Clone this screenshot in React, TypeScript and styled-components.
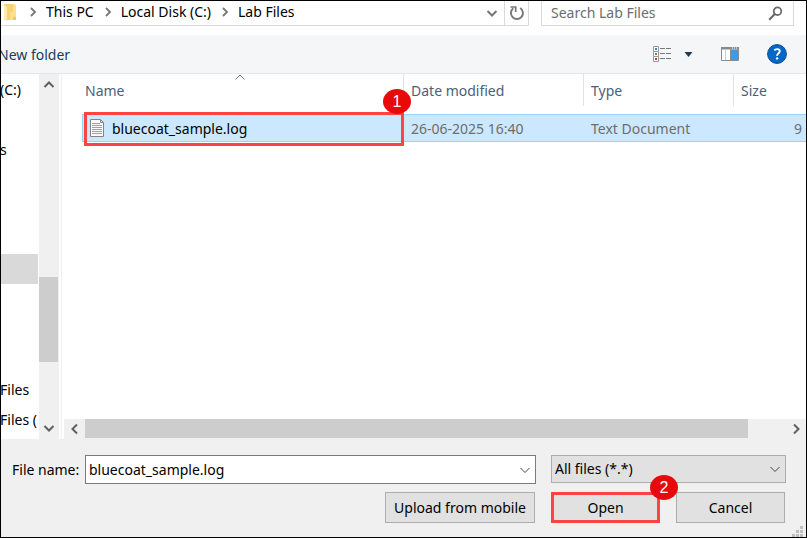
import React, { useState } from "react";
import styled, { createGlobalStyle } from "styled-components";

const GlobalStyle = createGlobalStyle`
  *, *::before, *::after { box-sizing: border-box; }
  body { margin: 0; }
  body, button, input, select {
    font-family: "Noto Sans", "Open Sans", sans-serif;
    font-size: 14px;
    line-height: 20px;
    color: #000;
  }
`;

const Dialog = styled.main`
  display: flex;
  flex-direction: column;
  min-height: 100vh;
  border: 1px solid #000;
  background: #fff;
  overflow: hidden;
`;

const AddressRow = styled.header`
  display: flex;
  gap: 12px;
  height: 34px;
  padding: 0 12px 9px 0;
`;

const AddressBar = styled.nav`
  display: flex;
  flex: 1;
  align-items: center;
  min-width: 0;
  padding-left: 3px;
  border: solid #d9d9d9;
  border-width: 0 1px 1px 0;
`;

const Crumbs = styled.ol`
  display: flex;
  flex: 1;
  align-items: center;
  margin: 0 0 0 11px;
  padding: 0 0 2px;
  list-style: none;
  white-space: nowrap;
`;

const Crumb = styled.li`
  display: flex;
  align-items: center;
  gap: 8px;
  margin-right: 9px;
`;

const CrumbLink = styled.a`
  color: #000;
  text-decoration: none;
`;

const IconButton = styled.button<{ $width: number; $divided?: boolean }>`
  display: flex;
  flex: none;
  align-items: center;
  justify-content: center;
  align-self: stretch;
  width: ${(p) => p.$width}px;
  padding: 0;
  border: 0;
  border-left: ${(p) => (p.$divided ? "1px solid #d9d9d9" : "0")};
  background: transparent;
`;

const SearchBox = styled.label`
  display: flex;
  flex: 0 0 253px;
  align-items: center;
  padding: 0 10px 0 9px;
  border: solid #d9d9d9;
  border-width: 0 1px 1px;
`;

const SearchInput = styled.input`
  flex: 1;
  min-width: 0;
  padding: 0;
  border: 0;
  outline: 0;
  background: transparent;
  color: #6d6d6d;
  &::placeholder { color: #6d6d6d; opacity: 1; }
`;

const Toolbar = styled.div`
  display: flex;
  align-items: center;
  height: 39px;
  padding-right: 9px;
  border-bottom: 1px solid #e4e6e8;
  background: #f5f6f7;
`;

const NewFolder = styled.button`
  margin: 0 auto 0 -3px;
  padding: 2px 0 0;
  border: 0;
  background: transparent;
  color: #1e395b;
`;

const Body = styled.div`
  display: flex;
  flex: 1;
`;

const Tree = styled.ul`
  flex: 0 0 37px;
  margin: 0 1px 0 0;
  padding: 0;
  list-style: none;
  overflow: hidden;
  white-space: nowrap;
`;

const TreeItem = styled.li<{ $selected?: boolean }>`
  height: 30px;
  padding-top: 6px;
  text-indent: -1px;
  background: ${(p) => (p.$selected ? "#d9d9d9" : "transparent")};
`;

const VerticalScroll = styled.div`
  display: flex;
  flex: 0 0 20px;
  flex-direction: column;
  align-items: center;
  padding: 5px 0;
  background: #f0f0f0;
`;

const VerticalTrack = styled.div`
  display: flex;
  flex: 1;
  flex-direction: column;
  align-self: stretch;
`;

const VerticalThumb = styled.div`
  flex: 85;
  margin-right: 1px;
  background: #cdcdcd;
`;

const TrackGap = styled.div<{ $share: number }>`
  flex: ${(p) => p.$share};
`;

const FilePane = styled.section`
  display: flex;
  flex: 1;
  flex-direction: column;
  min-width: 0;
  margin-left: 2px;
  border-left: 1px solid #f0f0f0;
`;

const FileTable = styled.table`
  width: calc(100% - 20px);
  margin-left: 20px;
  border-collapse: separate;
  border-spacing: 0;
  table-layout: fixed;
`;

const HeadCell = styled.th<{ $width?: number; $first?: boolean }>`
  position: relative;
  width: ${(p) => (p.$width ? `${p.$width}px` : "auto")};
  height: 32px;
  padding: 1px 0 0 ${(p) => (p.$first ? 3 : 7)}px;
  border-right: ${(p) => (p.$width ? "1px solid #e0e2e4" : "0")};
  color: #4c607a;
  font-weight: 400;
  text-align: left;
`;

const SortMark = styled.svg`
  position: absolute;
  top: 0;
  left: calc(50% - 8px);
`;

const Spacer = styled.td`
  height: 8px;
  padding: 0;
`;

const Cell = styled.td<{ $first?: boolean; $right?: boolean }>`
  position: relative;
  height: 28px;
  padding: 1px 4px 0 ${(p) => (p.$first ? 6 : 7)}px;
  border: solid #99d1ff;
  border-width: 1px 0 1px ${(p) => (p.$first ? 1 : 0)}px;
  background: #cce8ff;
  color: ${(p) => (p.$first ? "#000" : "#6d6d6d")};
  text-align: ${(p) => (p.$right ? "right" : "left")};
  white-space: nowrap;
`;

const FileName = styled.span`
  display: flex;
  align-items: center;
  gap: 7px;
`;

const Highlight = styled.div`
  position: absolute;
  top: -3px;
  right: 0;
  bottom: -5px;
  left: 1px;
  border: 3px solid #fd4344;
  pointer-events: none;
`;

const Badge = styled.span`
  position: absolute;
  top: -26px;
  right: -7px;
  display: grid;
  place-items: center;
  width: 28px;
  height: 25px;
  border-radius: 50%;
  background: #e80a0a;
  color: #fff;
  font-family: "Liberation Sans", sans-serif;
  font-size: 16px;
  z-index: 1;
`;

const HorizontalScroll = styled.div`
  display: flex;
  height: 20px;
  margin: auto 0 0 2px;
  padding-bottom: 1px;
  background: #f0f0f0;
`;

const HorizontalThumb = styled.div`
  flex: 663;
  background: #cdcdcd;
`;

const Footer = styled.form`
  position: relative;
  display: flex;
  flex-direction: column;
  gap: 8px;
  padding: 16px 20px 14px 11px;
  background: #f0f0f0;
`;

const FieldRow = styled.div`
  display: flex;
  align-items: center;
`;

const FieldLabel = styled.label`
  flex: 0 0 73px;
`;

const Combo = styled.div`
  display: flex;
  flex: 1;
  height: 29px;
  margin-right: 15px;
  border: 1px solid #7a7a7a;
  background: #fff;
`;

const ComboInput = styled.input`
  flex: 1;
  min-width: 0;
  padding: 0 0 0 3px;
  border: 0;
  outline: 0;
  background: transparent;
`;

const FilterWrap = styled.div`
  display: grid;
  flex: 0 0 235px;
  align-self: flex-start;
  align-items: center;
  & > * { grid-area: 1 / 1; }
  & > svg { justify-self: end; margin-right: 5px; pointer-events: none; }
`;

const FilterSelect = styled.select`
  width: 100%;
  height: 28px;
  padding: 0 24px 0 3px;
  border: 1px solid #adadad;
  border-radius: 0;
  appearance: none;
  background: #e1e1e1;
`;

const ButtonRow = styled.div`
  display: flex;
  justify-content: flex-end;
  gap: 16px;
  padding-right: 1px;
`;

const PushButton = styled.button<{ $width: number; $marked?: boolean }>`
  position: relative;
  width: ${(p) => p.$width}px;
  height: 31px;
  padding: 0;
  border: ${(p) => (p.$marked ? "3px solid #fd4344" : "1px solid #adadad")};
  background: #e1e1e1;
`;

const ButtonBadge = styled(Badge)`
  top: -20px;
  right: -21px;
`;

const Grip = styled.svg`
  position: absolute;
  right: 3px;
  bottom: 0;
`;

type Direction = "up" | "down" | "left" | "right";

const turns: Record<Direction, number> = { right: 0, down: 90, left: 180, up: 270 };

function Chevron({ to, weight = 2, color = "#606060" }: { to: Direction; weight?: number; color?: string }) {
  return (
    <svg width="12" height="12" viewBox="0 0 12 12" aria-hidden="true">
      <path
        d="M4 1.5 8.5 6 4 10.5"
        fill="none"
        stroke={color}
        strokeWidth={weight}
        transform={`rotate(${turns[to]} 6 6)`}
      />
    </svg>
  );
}

function CrumbChevron() {
  return (
    <svg width="10" height="12" viewBox="0 0 10 12" aria-hidden="true">
      <path d="M3 2 7 6 3 10" fill="none" stroke="#777" strokeWidth="1.8" />
    </svg>
  );
}

function FolderIcon() {
  return (
    <svg width="13" height="18" viewBox="0 0 13 18" aria-hidden="true">
      <path d="M0 0h9l3 1v15H0z" fill="#f5d273" />
      <path d="M9 1h3v15H6V9l3-2z" fill="#fbe08e" />
      <path d="M0 1l3 2v14.5L0 15z" fill="#ffebb0" />
      <path d="M9 13h3v3H9z" fill="#efc75e" />
    </svg>
  );
}

function RefreshIcon() {
  return (
    <svg width="16" height="16" viewBox="0 0 16 16" aria-hidden="true">
      <path d="M11.2 3A6 6 0 1 1 4.3 3.3" fill="none" stroke="#777" strokeWidth="1.9" />
      <path d="M1.5 2h5.2v5" fill="none" stroke="#777" strokeWidth="1.7" />
    </svg>
  );
}

function SearchIcon() {
  return (
    <svg width="15" height="15" viewBox="0 0 15 15" aria-hidden="true">
      <circle cx="9.5" cy="5.2" r="3.8" fill="none" stroke="#6b6b6b" strokeWidth="1.8" />
      <path d="M6.8 8 1.2 13.7" stroke="#6b6b6b" strokeWidth="2.2" />
    </svg>
  );
}

function ViewIcon() {
  const marks = ["#3b82c4", "#7c8a35", "#c9302c"];
  return (
    <svg width="19" height="17" viewBox="0 0 19 17" aria-hidden="true">
      {marks.map((mark, i) => (
        <g key={mark} transform={`translate(0 ${i * 5})`}>
          <path d="M.5 .5h5v5h-5z" fill="#fff" stroke="#999" />
          <path d="M2 2h2v2H2z" fill={mark} />
          <path d="M7 2.5h5M13 2.5h5" stroke="#777" />
        </g>
      ))}
    </svg>
  );
}

function PreviewIcon() {
  return (
    <svg width="18" height="14" viewBox="0 0 18 14" aria-hidden="true">
      <path d="M.5 .5h17v13H.5z" fill="#fff" stroke="#858b91" />
      <path d="M0 0h18v2.5H0z" fill="#858b91" />
      <path d="M11 1h1M13 1h1M15 1h1" stroke="#fff" />
      <path d="M4.5 3v10" stroke="#c9ccd0" />
      <path d="M10 2.5h7V13h-7z" fill="#3d9be6" />
      <path d="M9.5 2.5V13" stroke="#858b91" />
    </svg>
  );
}

function HelpIcon() {
  return (
    <svg width="20" height="20" viewBox="0 0 20 20" aria-hidden="true">
      <circle cx="10" cy="10" r="9.4" fill="#0568c8" stroke="#0a4a8c" />
      <path d="M7.2 6.2c3.5-2 6.2-.7 5.4 1.7-.5 1.4-2.6 1.8-2.5 4" fill="none" stroke="#fff" strokeWidth="1.8" />
      <circle cx="10.1" cy="14.4" r="1.2" fill="#fff" />
    </svg>
  );
}

function DocumentIcon() {
  return (
    <svg width="16" height="19" viewBox="0 0 16 19" aria-hidden="true">
      <path d="M1.5 .5h10l3 3v14h-13z" fill="#fafafa" stroke="#848484" />
      <path d="M11.5 .5v3h3" fill="none" stroke="#848484" />
      <path d="M3 4.5h8M3 6.5h10M3 8.5h10M3 10.5h10M3 12.5h10M3 14.5h10" stroke="#a0a0a0" />
    </svg>
  );
}

const crumbs = ["This PC", "Local Disk (C:)", "Lab Files"];
const treeItems = ["(C:)", "", "s", "", "", "", "", "", "", "", "Files", "Files ("];

export default function App() {
  const [fileName, setFileName] = useState("bluecoat_sample.log");

  return (
    <>
      <GlobalStyle />
      <Dialog>
        <AddressRow>
          <AddressBar aria-label="Location">
            <FolderIcon />
            <Crumbs>
              {crumbs.map((crumb) => (
                <Crumb key={crumb}>
                  <CrumbChevron />
                  <CrumbLink href="#">{crumb}</CrumbLink>
                </Crumb>
              ))}
            </Crumbs>
            <IconButton type="button" $width={24} aria-label="Previous locations">
              <Chevron to="down" color="#777" />
            </IconButton>
            <IconButton type="button" $width={24} $divided aria-label="Refresh">
              <RefreshIcon />
            </IconButton>
          </AddressBar>
          <SearchBox>
            <SearchInput type="text" placeholder="Search Lab Files" aria-label="Search Lab Files" />
            <SearchIcon />
          </SearchBox>
        </AddressRow>

        <Toolbar>
          <NewFolder type="button">New folder</NewFolder>
          <IconButton type="button" $width={24} aria-label="Change view">
            <ViewIcon />
          </IconButton>
          <IconButton type="button" $width={29} aria-label="More view options">
            <svg width="9" height="5" viewBox="0 0 9 5" aria-hidden="true">
              <path d="M.5 0h8L4.5 5z" fill="#1e395b" />
            </svg>
          </IconButton>
          <IconButton type="button" $width={54} aria-label="Preview pane">
            <PreviewIcon />
          </IconButton>
          <IconButton type="button" $width={40} aria-label="Help">
            <HelpIcon />
          </IconButton>
        </Toolbar>

        <Body>
          <Tree>
            {treeItems.map((item, i) => (
              <TreeItem key={i} $selected={i === 6}>{item}</TreeItem>
            ))}
          </Tree>
          <VerticalScroll>
            <IconButton type="button" $width={20} aria-label="Scroll up">
              <Chevron to="up" />
            </IconButton>
            <VerticalTrack>
              <TrackGap $share={186} />
              <VerticalThumb />
              <TrackGap $share={60} />
            </VerticalTrack>
            <IconButton type="button" $width={20} aria-label="Scroll down">
              <Chevron to="down" />
            </IconButton>
          </VerticalScroll>
          <FilePane>
            <FileTable>
              <thead>
                <tr>
                  <HeadCell $first $width={322}>
                    Name
                    <SortMark width="10" height="6" viewBox="0 0 10 6" aria-hidden="true">
                      <path d="M.5 5.5 5 1l4.5 4.5" fill="none" stroke="#777" />
                    </SortMark>
                  </HeadCell>
                  <HeadCell $width={180}>Date modified</HeadCell>
                  <HeadCell $width={150}>Type</HeadCell>
                  <HeadCell>Size</HeadCell>
                </tr>
              </thead>
              <tbody>
                <tr><Spacer colSpan={4} /></tr>
                <tr>
                  <Cell $first>
                    <FileName><DocumentIcon />bluecoat_sample.log</FileName>
                    <Highlight />
                    <Badge>1</Badge>
                  </Cell>
                  <Cell>26-06-2025 16:40</Cell>
                  <Cell>Text Document</Cell>
                  <Cell $right>9</Cell>
                </tr>
              </tbody>
            </FileTable>
            <HorizontalScroll>
              <IconButton type="button" $width={21} aria-label="Scroll left">
                <Chevron to="left" />
              </IconButton>
              <HorizontalThumb />
              <TrackGap $share={37} />
              <IconButton type="button" $width={21} aria-label="Scroll right">
                <Chevron to="right" />
              </IconButton>
            </HorizontalScroll>
          </FilePane>
        </Body>

        <Footer onSubmit={(e) => e.preventDefault()}>
          <FieldRow>
            <FieldLabel htmlFor="file-name">File name:</FieldLabel>
            <Combo>
              <ComboInput id="file-name" value={fileName} onChange={(e) => setFileName(e.target.value)} />
              <IconButton type="button" $width={20} aria-label="Recent file names">
                <Chevron to="down" weight={1} color="#444" />
              </IconButton>
            </Combo>
            <FilterWrap>
              <FilterSelect aria-label="File type">
                <option>All files (*.*)</option>
              </FilterSelect>
              <Chevron to="down" weight={1} color="#444" />
            </FilterWrap>
          </FieldRow>
          <ButtonRow>
            <PushButton type="button" $width={150}>Upload from mobile</PushButton>
            <PushButton type="submit" $width={109} $marked>
              Open
              <ButtonBadge>2</ButtonBadge>
            </PushButton>
            <PushButton type="button" $width={109}>Cancel</PushButton>
          </ButtonRow>
          <Grip width="11" height="11" viewBox="0 0 11 11" aria-hidden="true">
            <path d="M8 0h3v3H8zM4 4h3v3H4zM8 4h3v3H8zM0 8h3v3H0zM4 8h3v3H4zM8 8h3v3H8z" fill="#bfbfbf" />
          </Grip>
        </Footer>
      </Dialog>
    </>
  );
}
